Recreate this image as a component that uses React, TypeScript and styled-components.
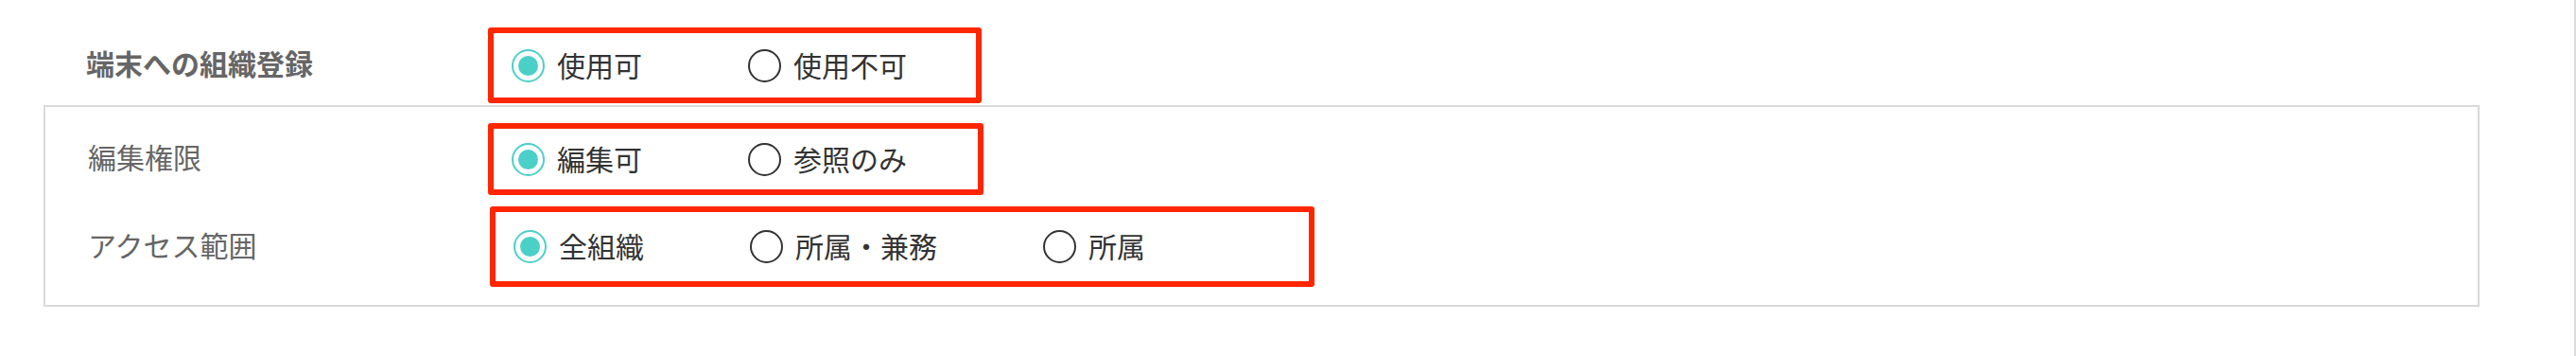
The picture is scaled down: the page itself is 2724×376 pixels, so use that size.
import React from "react";
import styled, { createGlobalStyle } from "styled-components";

const GlobalStyle = createGlobalStyle`
  body {
    margin: 0;
    background: #fff;
    font-family: "Noto Sans CJK JP", "Noto Sans", sans-serif;
  }
`;

const Page = styled.div`
  width: 2724px;
  height: 376px;
  box-sizing: border-box;
  padding-left: 46px;
  border-right: 2px solid #dcdcdc;
`;

const Container = styled.div`
  width: 2576px;
`;

const TopRow = styled.div`
  display: flex;
  align-items: center;
  padding: 29px 0 2px 45px;
`;

const Panel = styled.div`
  border: 2px solid #d9d9d9;
  padding: 17px 0 19px 45px;
  display: flex;
  flex-direction: column;
  gap: 12px;
`;

const Row = styled.div`
  display: flex;
  align-items: center;
`;

const Label = styled.div<{ $width: number; $bold?: boolean }>`
  width: ${(p) => p.$width}px;
  flex-shrink: 0;
  font-size: 30px;
  line-height: 1;
  padding-bottom: 6px;
  color: #666;
  white-space: nowrap;
  font-weight: ${(p) => (p.$bold ? 700 : 400)};
`;

const Highlight = styled.div<{ $width: number; $height: number }>`
  width: ${(p) => p.$width}px;
  height: ${(p) => p.$height}px;
  flex-shrink: 0;
  box-sizing: border-box;
  border: 6px solid #ff2600;
  border-radius: 3px;
  padding-left: 19px;
  display: flex;
  align-items: center;
`;

const Option = styled.label`
  display: flex;
  align-items: center;
  flex-shrink: 0;
  gap: 13px;
  margin-right: 112px;
  white-space: nowrap;
  cursor: pointer;
  &:last-child {
    margin-right: 0;
  }
`;

const Radio = styled.span<{ $checked?: boolean }>`
  width: 35px;
  height: 35px;
  flex-shrink: 0;
  box-sizing: border-box;
  border-radius: 50%;
  border: ${(p) => (p.$checked ? "2.5px solid #4bd0c8" : "2px solid #333")};
  display: flex;
  align-items: center;
  justify-content: center;
  &::after {
    content: "";
    width: 21px;
    height: 21px;
    border-radius: 50%;
    background: ${(p) => (p.$checked ? "#4bd0c8" : "transparent")};
  }
`;

const OptionText = styled.span`
  font-size: 30px;
  line-height: 1;
  padding-bottom: 3px;
  color: #333;
`;

type Field = {
  label: string;
  bold?: boolean;
  labelWidth: number;
  boxWidth: number;
  boxHeight: number;
  options: string[];
};

const RadioGroup = ({ field }: { field: Field }) => (
  <Highlight $width={field.boxWidth} $height={field.boxHeight}>
    {field.options.map((o, i) => (
      <Option key={o}>
        <Radio $checked={i === 0} />
        <OptionText>{o}</OptionText>
      </Option>
    ))}
  </Highlight>
);

const top: Field = {
  label: "端末への組織登録",
  bold: true,
  labelWidth: 425,
  boxWidth: 522,
  boxHeight: 80,
  options: ["使用可", "使用不可"],
};

const panelFields: Field[] = [
  {
    label: "編集権限",
    labelWidth: 423,
    boxWidth: 524,
    boxHeight: 76,
    options: ["編集可", "参照のみ"],
  },
  {
    label: "アクセス範囲",
    labelWidth: 425,
    boxWidth: 872,
    boxHeight: 85,
    options: ["全組織", "所属・兼務", "所属"],
  },
];

const App = () => {
  return (
    <Page>
      <GlobalStyle />
      <Container>
        <TopRow>
          <Label $width={top.labelWidth} $bold>
            {top.label}
          </Label>
          <RadioGroup field={top} />
        </TopRow>
        <Panel>
          {panelFields.map((f) => (
            <Row key={f.label}>
              <Label $width={f.labelWidth}>{f.label}</Label>
              <RadioGroup field={f} />
            </Row>
          ))}
        </Panel>
      </Container>
    </Page>
  );
};

export default App;
